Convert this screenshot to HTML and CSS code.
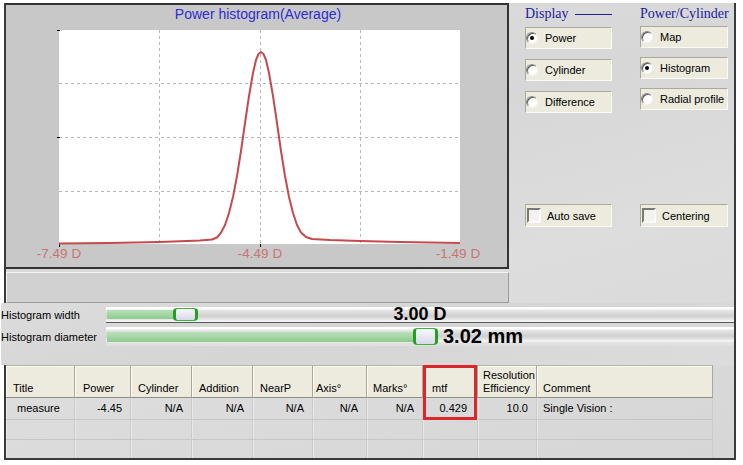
FILE: index.html
```html
<!DOCTYPE html>
<html>
<head>
<meta charset="utf-8">
<title>Power histogram</title>
<link rel="stylesheet" href="styles.css">
</head>
<body>
<div class="frame">
  <div class="top">
    <div class="left">
      <div class="chart">
        <svg width="501" height="262" viewBox="6 5 501 262" xmlns="http://www.w3.org/2000/svg">
          <rect x="59" y="30" width="401" height="214" fill="#ffffff"/>
          <g stroke="#b8b8b8" stroke-width="1" stroke-dasharray="3 3" fill="none">
            <line x1="159.5" y1="30" x2="159.5" y2="244"/>
            <line x1="260.5" y1="30" x2="260.5" y2="244"/>
            <line x1="360.5" y1="30" x2="360.5" y2="244"/>
            <line x1="59" y1="83.5" x2="460" y2="83.5"/>
            <line x1="59" y1="137.5" x2="460" y2="137.5"/>
            <line x1="59" y1="191.5" x2="460" y2="191.5"/>
          </g>
          <g stroke="#000" stroke-width="1">
            <line x1="57" y1="30.5" x2="60" y2="30.5"/>
            <line x1="57" y1="137.5" x2="60" y2="137.5"/>
            <line x1="59.5" y1="243" x2="59.5" y2="247"/>
            <line x1="260.5" y1="244" x2="260.5" y2="247"/>
          </g>
          <path d="M59,243.5 L110,243 L160,242 L200,240.5 L212,239.5 L217,237.5 L221,232.6 L225,225 L229,213 L233,197 L237,176 L241,151 L245,123 L249,96 L253,73 L256,60 L258.5,54 L261,52 L263.5,54 L266,60 L269,73 L273,96 L277,123 L281,151 L285,176 L289,197 L293,213 L297,225 L301,232.6 L306,237 L312,239 L330,240 L360,241 L400,242 L460,243" fill="none" stroke="#c44a4e" stroke-width="2" stroke-linejoin="round"/>
          <text class="ctitle" x="258" y="19" text-anchor="middle">Power histogram(Average)</text>
          <text class="axl" x="59" y="258" text-anchor="middle">-7.49 D</text>
          <text class="axl" x="260" y="258" text-anchor="middle">-4.49 D</text>
          <text class="axl" x="458" y="258" text-anchor="middle">-1.49 D</text>
        </svg>
      </div>
      <div class="blank"></div>
    </div>
    <div class="controls">
      <div class="col">
        <div class="grp-title">Display<span class="rule"></span></div>
        <div class="opt"><span class="radio on"></span>Power</div>
        <div class="opt"><span class="radio"></span>Cylinder</div>
        <div class="opt"><span class="radio"></span>Difference</div>
        <div class="opt chk chk1"><span class="cb"></span>Auto save</div>
      </div>
      <div class="col col2">
        <div class="grp-title">Power/Cylinder</div>
        <div class="opt"><span class="radio"></span>Map</div>
        <div class="opt"><span class="radio on"></span>Histogram</div>
        <div class="opt"><span class="radio"></span>Radial profile</div>
        <div class="opt chk chk2"><span class="cb"></span>Centering</div>
      </div>
    </div>
  </div>
  <div class="sliders">
    <div class="srow r1">
      <span class="slabel">Histogram width</span>
      <div class="track t1">
        <div class="fill" style="width:67px"></div>
        <div class="thumb"></div>
        <span class="sval centered">3.00 D</span>
      </div>
    </div>
    <div class="srow r2">
      <span class="slabel">Histogram diameter</span>
      <div class="track t2">
        <div class="fill" style="width:307px"></div>
        <div class="thumb"></div>
        <span class="sval big">3.02 mm</span>
      </div>
    </div>
  </div>
  <div class="tablewrap">
    <table class="grid">
      <thead>
        <tr>
          <th class="c1">Title</th>
          <th class="c2">Power</th>
          <th class="c3">Cylinder</th>
          <th class="c4">Addition</th>
          <th class="c5">NearP</th>
          <th class="c6">Axis°</th>
          <th class="c7">Marks°</th>
          <th class="c8">mtf</th>
          <th class="c9">Resolution Efficiency</th>
          <th class="c10">Comment</th>
        </tr>
      </thead>
      <tbody>
        <tr class="row1">
          <td class="tl">measure</td>
          <td>-4.45</td>
          <td>N/A</td>
          <td>N/A</td>
          <td>N/A</td>
          <td>N/A</td>
          <td>N/A</td>
          <td class="mtf">0.429</td>
          <td>10.0</td>
          <td class="cm">Single Vision :</td>
        </tr>
        <tr class="row2"><td></td><td></td><td></td><td></td><td></td><td></td><td></td><td></td><td></td><td></td></tr>
        <tr class="row3"><td></td><td></td><td></td><td></td><td></td><td></td><td></td><td></td><td></td><td></td></tr>
      </tbody>
    </table>
    <div class="mark"></div>
  </div>
</div>
</body>
</html>
```
FILE: styles.css
```css
* { box-sizing: border-box; }
html, body { margin: 0; padding: 0; }
body {
  width: 743px;
  height: 465px;
  overflow: hidden;
  background: #ffffff;
  font-family: "Liberation Sans", Arial, sans-serif;
  font-size: 11px;
  color: #000;
}
.frame {
  margin: 3px 0 0 4px;
  width: 732px;
  height: 457px;
  border-left: 2px solid #3a3a3a;
  border-right: 2px solid #3a3a3a;
  border-bottom: 2px solid #3a3a3a;
  background: linear-gradient(165deg, #dedede 0%, #d7d7d7 35%, #dddddd 60%, #d6d6d6 100%);
  display: flex;
  flex-direction: column;
}
.top { display: flex; height: 300px; }
.left { width: 503px; display: flex; flex-direction: column; }
.chart {
  height: 266px;
  border-top: 2px solid #333;
  border-right: 2px solid #333;
  border-bottom: 2px solid #333;
  background: #c8c8c8;
}
.chart svg { display: block; }
.ctitle { font-family: "Liberation Sans", Arial, sans-serif; font-size: 14px; fill: #2c2cd2; }
.axl { font-family: "Liberation Sans", Arial, sans-serif; font-size: 13.5px; fill: #c87474; }
.blank {
  margin-top: 3px;
  height: 31px;
  background: #d1d1d1;
  border: 1px solid;
  border-color: #f4f4f4 #9c9c9c #9c9c9c #f4f4f4;
}
.controls {
  flex: 1;
  display: flex;
  padding: 0 0 0 16px;
  gap: 28px;
}
.col { width: 87px; display: flex; flex-direction: column; gap: 10px; }
.col2 { width: 88px; gap: 9px; }
.grp-title {
  font-family: "Liberation Serif", "Times New Roman", serif;
  font-size: 14px;
  line-height: 16px;
  height: 16px;
  margin-top: 3px;
  margin-bottom: -5px;
  color: #20209c;
  display: flex;
  align-items: center;
  white-space: nowrap;
}
.rule { width: 39px; height: 1px; margin-left: 6px; background: #20209c; }
.opt {
  height: 22px;
  background: #ecebdd;
  border: 1px solid;
  border-color: #a9a99c #fbfbf6 #fbfbf6 #a9a99c;
  display: flex;
  align-items: center;
  gap: 7px;
  padding-left: 0;
  white-space: nowrap;
  overflow: hidden;
  font-size: 11px;
}
.radio {
  width: 12px;
  height: 12px;
  flex: none;
  border-radius: 50%;
  background: #ffffff;
  border: 1px solid;
  border-color: #8c8c8c #f2f2f2 #f2f2f2 #8c8c8c;
  box-shadow: inset 1px 1px 0 #5a5a5a;
  display: flex;
  align-items: center;
  justify-content: center;
}
.radio.on::after {
  content: "";
  width: 4px;
  height: 4px;
  border-radius: 50%;
  background: #000;
}
.chk { height: 23px; gap: 6px; padding-left: 1px; }
.chk1 { margin-top: 81px; }
.chk2 { margin-top: 85px; }
.cb {
  width: 14px;
  height: 15px;
  flex: none;
  background: #f2f2ee;
  border: 2px solid;
  border-color: #7a7a72 #fafafa #fafafa #7a7a72;
}
.sliders {
  margin-left: -5px;
  margin-right: 0;
  height: 62px;
  padding-top: 4px;
  background: linear-gradient(170deg, #dcdcdc, #d5d5d5 50%, #dcdcdc);
}
.srow { display: flex; align-items: center; }
.r1 { height: 16px; }
.r2 { height: 19px; margin-top: 4px; }
.slabel { width: 105px; flex: none; white-space: nowrap; font-size: 11px; }
.track {
  flex: 1;
  height: 100%;
  position: relative;
  display: flex;
  align-items: center;
  padding-left: 1px;
  background: linear-gradient(to bottom, #ffffff 0px, #ffffff 2px, #e6e6e6 3px, #d8d8d8 7px, #cfcfcf 9px, #e2e2e2 12px, #f6f6f6 14px, #e0e0e0 16px);
}
.t1 { border-bottom: 1px solid #5a5a5a; }
.fill {
  height: 9px;
  flex: none;
  background: linear-gradient(#b8e0b8, #8fcb8f);
}
.t2 .fill { height: 10px; }
.thumb {
  width: 25px;
  height: 13px;
  flex: none;
  margin-left: -1px;
  border: 1px solid #3cb43c;
  border-left: 3px solid #22a022;
  border-right: 3px solid #22a022;
  border-radius: 4px;
  background: linear-gradient(#f8f8fc, #d8d8ec);
}
.t2 .thumb { height: 17px; }
.sval { font-weight: bold; white-space: nowrap; }
.centered {
  position: absolute;
  left: 0;
  right: 0;
  top: -3px;
  text-align: center;
  font-size: 18px;
  line-height: 20px;
}
.big { font-size: 20px; line-height: 19px; margin-left: 5px; }
.tablewrap { position: relative; height: 93px; }
.grid {
  table-layout: fixed;
  border-collapse: separate;
  border-spacing: 0;
  width: 707px;
}
.grid th {
  height: 33px;
  background: #ecebdd;
  border-top: 1px solid #b4b4a8;
  border-right: 1px solid #aca899;
  border-bottom: 1px solid #8e8e86;
  box-shadow: inset 1px 1px 0 #fbfbf6;
  font-weight: normal;
  text-align: left;
  vertical-align: bottom;
  padding: 0 0 2px 7px;
  line-height: 13px;
  font-size: 11px;
  white-space: nowrap;
  overflow: hidden;
}
.c1 { width: 69px; }
.c2 { width: 56px; padding-left: 8px !important; }
.c3 { width: 61px; }
.c4 { width: 61px; }
.c5 { width: 60px; }
.c6 { width: 54px; padding-left: 3px !important; }
.c7 { width: 56px; padding-left: 6px !important; }
.c8 { width: 55px; padding-left: 9px !important; }
.c9 { width: 59px; white-space: normal !important; padding-left: 5px !important; word-break: keep-all; }
.c10 { width: 176px; padding-left: 6px !important; }
.grid td {
  border-right: 1px solid #cbcbcb;
  border-bottom: 1px solid #c6c6c6;
  box-shadow: inset 1px 0 0 #e8e8e8;
  text-align: right;
  padding: 0 8px 0 0;
  font-size: 11px;
  line-height: 13px;
  white-space: nowrap;
  overflow: hidden;
}
.row1 td { height: 22px; }
.row2 td { height: 20px; }
.row3 td { height: 18px; border-bottom: none; }
.grid td.tl { text-align: left; padding-left: 11px; }
.grid td.mtf { padding-right: 10px; }
.grid td.cm { text-align: left; padding-left: 6px; }
.mark {
  position: absolute;
  left: 417px;
  top: 0;
  width: 54px;
  height: 55px;
  border: 3px solid #d8282c;
}
```
